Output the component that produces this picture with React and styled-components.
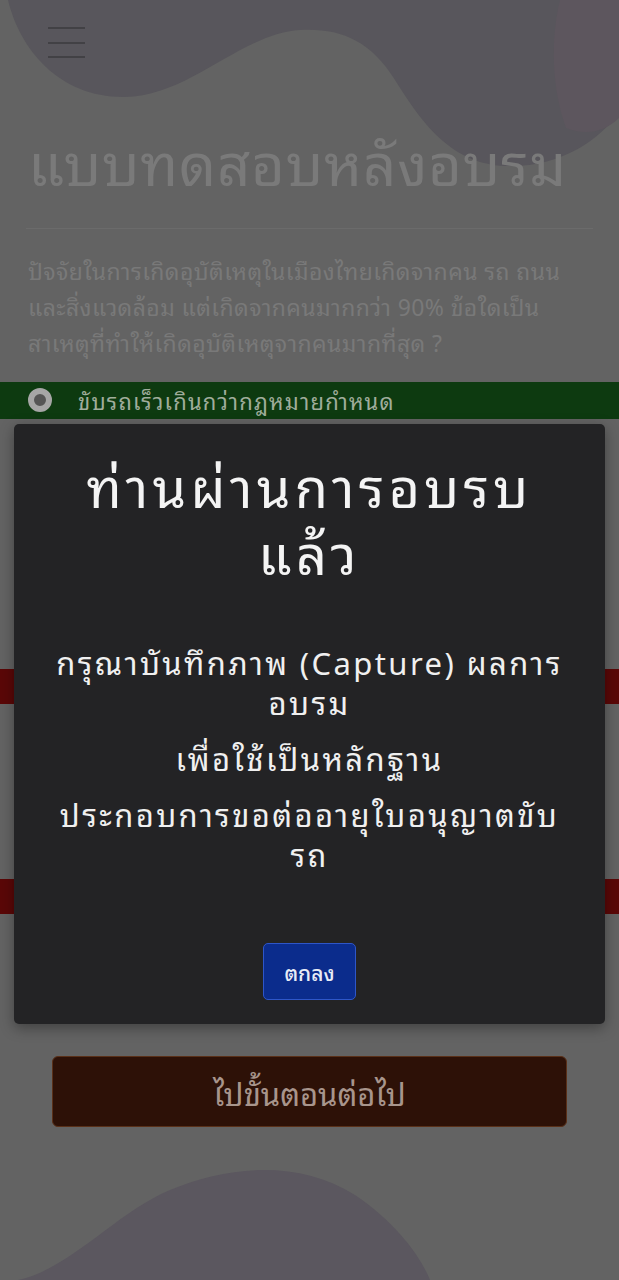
import React from 'react';
import styled, { createGlobalStyle } from 'styled-components';

const GlobalStyle = createGlobalStyle`
  html, body {
    margin: 0;
    padding: 0;
    background: #636363;
  }
  body {
    font-family: "Noto Sans Thai Looped", "Loma", "Garuda", "Noto Sans Thai", "Noto Sans", "Liberation Sans", sans-serif;
  }
  * {
    box-sizing: border-box;
  }
`;

const Page = styled.div`
  position: relative;
  width: 619px;
  min-height: 1280px;
  overflow: hidden;
  background-color: #636363;
`;

const Blobs = styled.svg`
  position: absolute;
  inset: 0;
  width: 619px;
  height: 1280px;
  pointer-events: none;
`;

const Content = styled.div`
  position: relative;
  display: flex;
  flex-direction: column;
`;

const Header = styled.header`
  height: 92px;
  padding: 27px 0 0 48px;
`;

const Burger = styled.button`
  display: flex;
  flex-direction: column;
  gap: 12.5px;
  width: 37px;
  padding: 0;
  border: 0;
  background: transparent;

  span {
    display: block;
    height: 2px;
    background-color: #424145;
  }
`;

const Title = styled.h1`
  margin: 33px 0 0;
  padding: 0 28px;
  font-weight: 400;
  font-size: 58px;
  line-height: 70px;
  letter-spacing: 0.8px;
  color: #7a7a7a;
  white-space: nowrap;
`;

const Divider = styled.hr`
  margin: 33px 26px 0;
  border: 0;
  border-top: 1px solid #6b6b6b;
`;

const Question = styled.p`
  margin: 23px 0 0;
  padding: 0 28px;
  font-size: 23px;
  line-height: 36px;
  letter-spacing: 0.4px;
  color: #797979;
  white-space: nowrap;
`;

const Options = styled.ul`
  list-style: none;
  margin: 22px 0 0;
  padding: 0;
  display: flex;
  flex-direction: column;
`;

const toneColors = {
  right: '#0d3a10',
  wrong: '#5a0707',
  none: 'transparent',
};

// rows below the first are hidden behind the dialog, only their bands show
const OptionRow = styled.li`
  display: flex;
  align-items: flex-start;
  gap: 26px;
  height: ${(p) => p.$h}px;
  padding: 3px 0 0 28px;
  background-color: ${(p) => toneColors[p.$tone]};
  font-size: 22px;
  line-height: 30px;
  letter-spacing: 1.2px;
  color: ${(p) => (p.$tone === 'right' ? '#a0ad9c' : '#7a7a7a')};
`;

const Radio = styled.span`
  flex: none;
  width: 24px;
  height: 24px;
  margin-top: 3px;
  border-radius: 50%;
  border: 6px solid #a6a6a6;
  background-color: #555555;
`;

const NextButton = styled.button`
  align-self: center;
  width: 515px;
  height: 71px;
  margin-top: 24px;
  border: 1px solid #5a3018;
  border-radius: 6px;
  background-color: #2d1107;
  font-family: inherit;
  font-size: 31px;
  color: #a8958c;
`;

const Modal = styled.div`
  position: absolute;
  top: 424px;
  left: 14px;
  right: 14px;
  height: 600px;
  display: flex;
  flex-direction: column;
  align-items: center;
  padding: 26px 10px 24px;
  border-radius: 5px;
  background-color: #232325;
  box-shadow: 0 4px 14px rgba(0, 0, 0, 0.35);
  text-align: center;
`;

const ModalTitle = styled.h2`
  margin: 0;
  font-weight: 400;
  font-size: 54px;
  line-height: 67px;
  letter-spacing: 4.3px;
  color: #f4f4f4;
  white-space: nowrap;
`;

const ModalBody = styled.div`
  margin-top: 57px;
  display: flex;
  flex-direction: column;
  gap: 16px;
  font-size: 31px;
  line-height: 40px;
  letter-spacing: 2.4px;
  color: #f0f0f0;
  white-space: nowrap;

  p {
    margin: 0;
  }
`;

const OkButton = styled.button`
  margin-top: auto;
  width: 93px;
  height: 57px;
  border: 1px solid #2e56c8;
  border-radius: 5px;
  background-color: #0b2c8c;
  font-family: inherit;
  font-size: 21px;
  font-weight: 500;
  color: #e8ecf6;
`;

export default function App() {
  return (
    <>
      <GlobalStyle />
      <Page>
        <Blobs viewBox="0 0 619 1280">
          <path
            d="M0,0 L619,0 L619,112 C600,140 560,168 505,166 C450,164 420,120 395,80 C370,40 340,28 300,30 C240,34 190,96 125,97 C60,98 20,50 8,0 Z"
            fill="#58565c"
          />
          <path
            d="M560,0 L619,0 L619,118 C605,132 585,136 566,128 C552,90 550,40 560,0 Z"
            fill="#5d565e"
          />
          <path
            d="M0,1282 C60,1282 110,1215 170,1190 C230,1165 300,1160 355,1195 C395,1222 420,1255 430,1280 L0,1280 Z"
            fill="#5b575f"
          />
        </Blobs>
        <Content>
          <Header>
            <Burger aria-label="menu">
              <span />
              <span />
              <span />
            </Burger>
          </Header>
          <Title>แบบทดสอบหลังอบรม</Title>
          <Divider />
          <Question>
            ปัจจัยในการเกิดอุบัติเหตุในเมืองไทยเกิดจากคน รถ ถนน
            <br />
            และสิ่งแวดล้อม แต่เกิดจากคนมากกว่า 90% ข้อใดเป็น
            <br />
            สาเหตุที่ทำให้เกิดอุบัติเหตุจากคนมากที่สุด ?
          </Question>
          <Options>
            <OptionRow $tone="right" $h={37}>
              <Radio />
              ขับรถเร็วเกินกว่ากฎหมายกำหนด
            </OptionRow>
            <OptionRow $tone="none" $h={250} />
            <OptionRow $tone="wrong" $h={35} />
            <OptionRow $tone="none" $h={175} />
            <OptionRow $tone="wrong" $h={35} />
            <OptionRow $tone="none" $h={118} />
          </Options>
          <NextButton>ไปขั้นตอนต่อไป</NextButton>
        </Content>
        <Modal role="dialog">
          <ModalTitle>
            ท่านผ่านการอบรบ
            <br />
            แล้ว
          </ModalTitle>
          <ModalBody>
            <p>
              กรุณาบันทึกภาพ (Capture) ผลการ
              <br />
              อบรม
            </p>
            <p>เพื่อใช้เป็นหลักฐาน</p>
            <p>
              ประกอบการขอต่ออายุใบอนุญาตขับ
              <br />
              รถ
            </p>
          </ModalBody>
          <OkButton>ตกลง</OkButton>
        </Modal>
      </Page>
    </>
  );
}
